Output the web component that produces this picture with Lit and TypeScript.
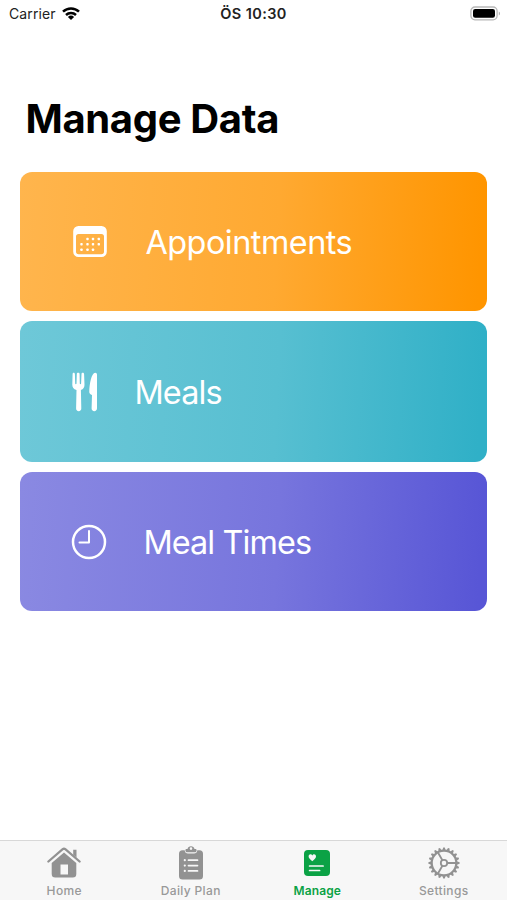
import { LitElement, html, css, svg } from "lit";
import { customElement, property } from "lit/decorators.js";
import { classMap } from "lit/directives/class-map.js";

const teeth = Array.from({ length: 20 }, (_, i) => i * 18);

const icons = {
  calendar: html`<svg width="36" height="34" viewBox="0 0 36 34">
    <path fill="#fff" fill-rule="evenodd" d="M6.500 1h23a5.300 5.300 0 0 1 5.300 5.300v20.400a5.300 5.300 0 0 1-5.300 5.300h-23a5.300 5.300 0 0 1-5.300-5.300V6.300A5.300 5.300 0 0 1 6.500 1zM6.600 9a2.600 2.600 0 0 0-2.600 2.600v15a2.600 2.600 0 0 0 2.600 2.600h22.800a2.600 2.600 0 0 0 2.600-2.600v-15a2.600 2.600 0 0 0-2.600-2.600z"/>
    <g fill="#fff">${[[15.500, 14], [21, 14], [26.800, 14], [9.500, 19.300], [15.500, 19.300], [21, 19.300], [26.800, 19.300], [9.500, 24.800], [15.500, 24.800], [21, 24.800]].map(
      ([x, y]) => svg`<rect x=${x - 1.2} y=${y - 1.2} width="2.4" height="2.4" rx="0.7"/>`
    )}</g></svg>`,
  fork: html`<svg width="26" height="40" viewBox="0 0 26 40">
    <path fill="#fff" d="M1.600 .8c.9 0 1.300.6 1.300 1.400l.3 9.300c0 .9 1.300.9 1.300 0l.3-9.300C4.800 1.300 5.300.8 6.200.8s1.400.5 1.400 1.400l.2 9.300c0 .9 1.300.9 1.300 0l.4-9.300c0-.9.5-1.400 1.300-1.400s1.300.6 1.300 1.400l.4 10.600c0 2.700-1.100 4.200-3.600 5.300l.4 18.200c.1 1.700-1 2.900-2.600 2.900s-2.700-1.200-2.600-2.900l.4-18.200C1.500 17 .3 15.500.3 12.800L.6 2.200C.6 1.400.9.800 1.600.8z"/>
    <path fill="#fff" d="M23.200.8c1.200 0 1.800.8 1.800 2v33.500c0 1.700-1.100 2.900-2.700 2.900s-2.800-1.200-2.700-2.900l.4-13.200c-1.700-.8-2.700-1.500-2.700-3.100C17.300 12.500 19.500.8 23.200.8z"/></svg>`,
  clock: html`<svg width="36" height="36" viewBox="0 0 36 36">
    <circle cx="18" cy="18" r="16" fill="none" stroke="#fff" stroke-width="2.500"/>
    <path d="M18 7v11.500H8.500" fill="none" stroke="#fff" stroke-width="2" stroke-linecap="round" stroke-linejoin="round"/></svg>`,
  home: html`<svg width="34" height="32" viewBox="0 0 34 32">
    <path d="M1.400 14.500 15.700 2.200q1.300-1 2.600 0L32.600 14.500" fill="none" stroke="currentColor" stroke-width="2.300" stroke-linecap="round"/>
    <path fill="currentColor" d="M26.200 2.800h3.300v7.800l-3.300-2.900z"/>
    <path fill="currentColor" fill-rule="evenodd" d="M17 5.400 29.300 16v10.900a3.500 3.500 0 0 1-3.500 3.500H8.200a3.500 3.500 0 0 1-3.500-3.500V16zM13.500 17.500v10h7.500v-10z"/></svg>`,
  clipboard: html`<svg width="26" height="36" viewBox="0 0 26 36">
    <path fill="currentColor" d="M4.500 5.200h2.200c.2 2.200 1.400 3.300 3.300 3.300h6c1.900 0 3.100-1.100 3.300-3.300h2.200a3.500 3.500 0 0 1 3.500 3.500v22.400a3.500 3.500 0 0 1-3.500 3.500h-17a3.500 3.500 0 0 1-3.500-3.500V8.700a3.500 3.500 0 0 1 3.500-3.500z"/>
    <path fill="currentColor" fill-rule="evenodd" d="M9.500 3.900a3.600 3.600 0 0 1 7 0h.8c1.200 0 1.300.6 1.300 1.600s-.7 1.800-1.800 1.800H9.200c-1.100 0-1.800-.8-1.800-1.800s.1-1.600 1.300-1.600zM13 2.300a1.300 1.300 0 1 0 0 2.600 1.300 1.300 0 0 0 0-2.600z"/>
    <g stroke="#f7f7f7" stroke-width="1.700" stroke-linecap="round"><path d="M10.500 15.200h9M10.500 20.600h9M10.500 25.900h9"/><path stroke-width="2.200" d="M6.800 15.200h.01M6.800 20.600h.01M6.800 25.900h.01"/></g></svg>`,
  card: html`<svg width="26" height="26" viewBox="0 0 26 26">
    <rect width="26" height="26" rx="4" fill="currentColor"/>
    <path fill="#f7f7f7" d="M8.300 11.200C5.700 9.200 4.600 8 4.600 6.300c0-2.400 2.800-2.900 3.700-.9.900-2 3.700-1.500 3.700.9 0 1.700-1.100 2.900-3.700 4.900z"/>
    <path stroke="#f7f7f7" stroke-width="1.700" stroke-linecap="round" d="M5.600 16h13.500M5.600 20.500h10"/></svg>`,
  gear: html`<svg width="32" height="32" viewBox="0 0 32 32">
    <g fill="none" stroke="currentColor">
      <circle cx="16" cy="16" r="12.300" stroke-width="2.200"/>
      <circle cx="16" cy="16" r="3.200" stroke-width="1.800"/>
      <path stroke-width="1.800" d="M19.200 16H28M14.400 13.200 9.800 5.300M14.400 18.800 9.800 26.700"/>
    </g>
    <g fill="currentColor">${teeth.map((a) => svg`<path transform="rotate(${a} 16 16)" d="M14.300 3.400 15.200.4h1.600l.9 3z"/>`)}</g></svg>`,
};

type IconName = keyof typeof icons;

@customElement("data-card")
class DataCard extends LitElement {
  @property() label = "";
  @property() icon: IconName = "calendar";
  static styles = css`
    :host { display: flex; align-items: center; border-radius: 12px; color: #fff; box-sizing: border-box; padding-left: var(--lead); }
    svg { display: block; }
    .label { font: 400 32.400px/40px Inter, sans-serif; white-space: nowrap; margin-left: var(--gap); padding-top: 2px; letter-spacing: var(--track); }
  `;
  render() {
    return html`${icons[this.icon]}<span class="label">${this.label}</span>`;
  }
}

@customElement("tab-item")
class TabItem extends LitElement {
  @property() label = "";
  @property() icon: IconName = "home";
  @property({ type: Boolean }) active = false;
  static styles = css`
    :host { flex: 1; display: block; }
    .tab { display: flex; flex-direction: column; align-items: center; color: #929292; }
    .active { color: #0ba245; }
    .glyph { height: 43px; display: flex; align-items: center; }
    svg { display: block; }
    .label { font: 500 12px/14px Inter, sans-serif; letter-spacing: 0.35px; color: #999; white-space: nowrap; }
    .active .label { color: #0ba245; font-weight: 600; letter-spacing: 0.1px; }
  `;
  render() {
    return html`<div class=${classMap({ tab: true, active: this.active })}>
      <div class="glyph">${icons[this.icon]}</div>
      <span class="label">${this.label}</span>
    </div>`;
  }
}

@customElement("app-root")
class AppRoot extends LitElement {
  static styles = css`
    :host { display: flex; flex-direction: column; height: 900px; background: #fff; font-family: Inter, sans-serif; overflow: hidden; }
    .status { display: grid; grid-template-columns: 1fr auto 1fr; align-items: center; height: 28px; font-size: 14px; line-height: 18px; color: #222; padding: 0 6px; }
    .carrier { display: flex; align-items: center; gap: 6px; letter-spacing: 0.1px; margin-left: 3px; }
    .time { font-weight: 600; font-size: 14.500px; letter-spacing: 0.400px; }
    .battery { justify-self: end; }
    svg { display: block; }
    h1 { margin: 67px 0 0 25.500px; font-size: 40px; line-height: 48px; font-weight: 700; letter-spacing: -0.350px; color: #000; white-space: nowrap; }
    .cards { display: flex; flex-direction: column; gap: 10px; margin: 29px 19.600px 0 20.400px; }
    .orange { height: 139px; background: linear-gradient(93deg, #ffb54d, #ffa931 55%, #ff9500 98%); --lead: 52px; --gap: 37px; --track: -0.500px; }
    .teal { height: 141.400px; background: linear-gradient(93deg, #6ec8d8, #57bfd1 55%, #30b0c7 98%); --lead: 52px; --gap: 36px; --track: -0.850px; }
    .indigo { height: 139px; background: linear-gradient(93deg, #8a89e2, #7775dd 55%, #5856d6 98%); --lead: 51px; --gap: 36px; --track: -0.900px; }
    nav { display: flex; margin-top: auto; height: 59px; border-top: 1px solid #d8d8d8; background: #f7f7f7; padding-left: 1px; }
  `;
  render() {
    return html`
      <div class="status">
        <div class="carrier"><span>Carrier</span>
          <svg width="18" height="14" viewBox="0 0 18 14"><g fill="none" stroke="#000" stroke-width="2.500"><path d="M1 4.700a11.600 11.600 0 0 1 16 0M4 8a7.300 7.300 0 0 1 10 0"/></g><path d="M9 13.100 5.900 10a4.500 4.500 0 0 1 6.200 0z"/></svg>
        </div>
        <div class="time">ÖS 10:30</div>
        <svg class="battery" width="31" height="16" viewBox="0 0 31 16">
          <rect x=".9" y="1" width="26.200" height="12.800" rx="4" fill="#fff" stroke="#b8b8b8" stroke-width="1.300"/>
          <rect x="3" y="3.100" width="22" height="8.600" rx="2.200"/>
          <path d="M28.800 5.400c1.600.6 1.600 3.400 0 4z" fill="#b0b0b0"/>
        </svg>
      </div>
      <h1>Manage Data</h1>
      <div class="cards">
        <data-card class="orange" icon="calendar" label="Appointments"></data-card>
        <data-card class="teal" icon="fork" label="Meals"></data-card>
        <data-card class="indigo" icon="clock" label="Meal Times"></data-card>
      </div>
      <nav>
        <tab-item icon="home" label="Home"></tab-item>
        <tab-item icon="clipboard" label="Daily Plan"></tab-item>
        <tab-item icon="card" label="Manage" active></tab-item>
        <tab-item icon="gear" label="Settings"></tab-item>
      </nav>
    `;
  }
}
